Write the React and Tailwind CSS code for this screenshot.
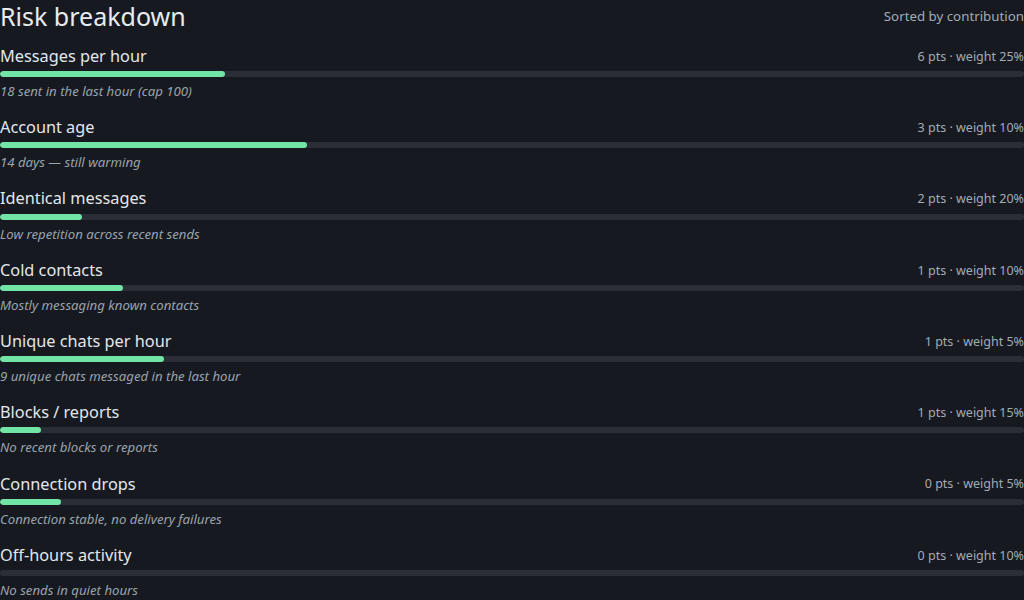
const factors = [
  { name: 'Messages per hour', pts: 6, weight: 25, fill: 22, note: '18 sent in the last hour (cap 100)' },
  { name: 'Account age', pts: 3, weight: 10, fill: 30, note: '14 days — still warming' },
  { name: 'Identical messages', pts: 2, weight: 20, fill: 8, note: 'Low repetition across recent sends' },
  { name: 'Cold contacts', pts: 1, weight: 10, fill: 12, note: 'Mostly messaging known contacts' },
  { name: 'Unique chats per hour', pts: 1, weight: 5, fill: 16, note: '9 unique chats messaged in the last hour' },
  { name: 'Blocks / reports', pts: 1, weight: 15, fill: 4, note: 'No recent blocks or reports' },
  { name: 'Connection drops', pts: 0, weight: 5, fill: 6, note: 'Connection stable, no delivery failures' },
  { name: 'Off-hours activity', pts: 0, weight: 10, fill: 0, note: 'No sends in quiet hours' },
];

function FactorRow({ factor }) {
  return (
    <div className="flex flex-col">
      <div className="flex items-center justify-between h-6">
        <span className="text-[16.3px] text-[#e3e7ec]">{factor.name}</span>
        <span className="pt-0.5 text-[12.5px] text-[#a3abb5]">
          {factor.pts} pts · weight {factor.weight}%
        </span>
      </div>
      <div className="mt-[3px] h-1.5 w-full rounded-full bg-[#2a2f37] overflow-hidden">
        <div className="h-full rounded-full bg-[#72e4a6]" style={{ width: `${factor.fill}%` }} />
      </div>
      <p className="mt-[5px] text-[13.2px] leading-[18px] italic text-[#9ba3ad]">{factor.note}</p>
    </div>
  );
}

export default function App() {
  return (
    <div
      className="min-h-screen bg-[#161a20] text-white overflow-hidden"
      style={{ fontFamily: '"Noto Sans", sans-serif' }}
    >
      <div className="flex items-center justify-between pt-px h-[33px]">
        <h1 className="text-[25px] text-[#e8ebef]">Risk breakdown</h1>
        <span className="text-[13.3px] text-[#a3abb5]">Sorted by contribution</span>
      </div>
      <div className="mt-[11px] flex flex-col gap-[15.3px]">
        {factors.map((f) => (
          <FactorRow key={f.name} factor={f} />
        ))}
      </div>
    </div>
  );
}
